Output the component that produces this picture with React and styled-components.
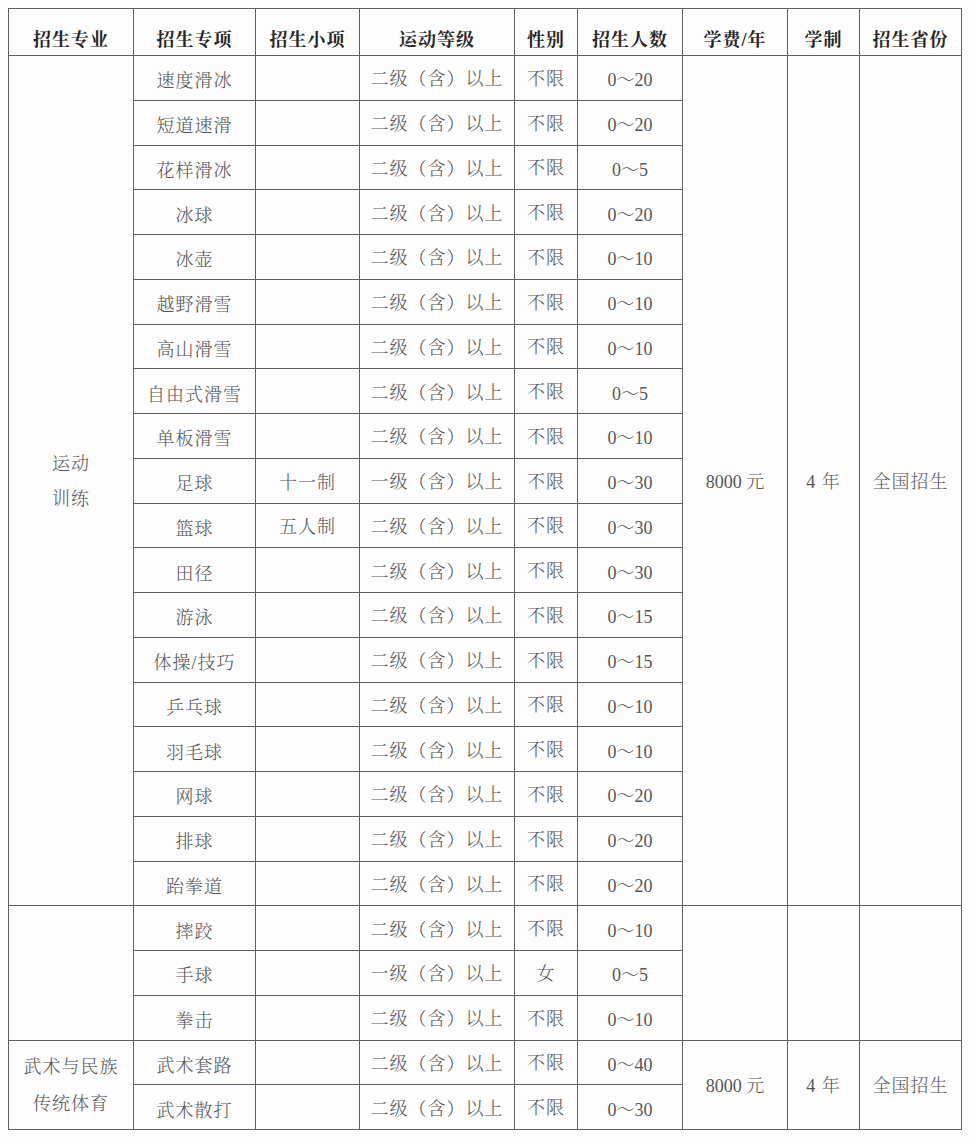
import React from "react";
import styled, { createGlobalStyle } from "styled-components";

const Global = createGlobalStyle`
  html, body { background: #fdfdfd; }
  body {
    margin: 8px;
    font-family: "Liberation Serif", "Noto Serif CJK SC", "Noto Sans CJK SC", serif;
  }
`;

const Table = styled.div`
  display: grid;
  width: 954px;
  box-sizing: border-box;
  grid-template-columns: 124px 121px 103px 154px 62px 104px 104px 71px 101px;
  grid-template-rows: 46px repeat(24, 43.75px);
  gap: 1px;
  padding: 1px;
  background: #606060;
`;

const Head = styled.div`
  background: #fdfdfd;
  display: flex;
  align-items: center;
  justify-content: center;
  padding-top: 11px;
  box-sizing: border-box;
  font-size: 18px;
  font-weight: 700;
  letter-spacing: 1px;
  color: #262626;
`;

const Cell = styled.div`
  background: #fdfdfd;
  grid-row: span ${(p) => p.$span || 1};
  display: flex;
  flex-direction: column;
  align-items: center;
  justify-content: center;
  box-sizing: border-box;
  padding-top: ${(p) => p.$nudge ?? 4}px;
  font-size: 18px;
  font-weight: 300;
  letter-spacing: ${(p) => (p.$tight ? 0 : 1)}px;
  color: #565656;
  line-height: ${(p) => p.$lh || 20}px;
  white-space: nowrap;
`;

const headers = ["招生专业", "招生专项", "招生小项", "运动等级", "性别", "招生人数", "学费/年", "学制", "招生省份"];

const rows = [
  ["速度滑冰", "", "二", "不限", "0～20"],
  ["短道速滑", "", "二", "不限", "0～20"],
  ["花样滑冰", "", "二", "不限", "0～5"],
  ["冰球", "", "二", "不限", "0～20"],
  ["冰壶", "", "二", "不限", "0～10"],
  ["越野滑雪", "", "二", "不限", "0～10"],
  ["高山滑雪", "", "二", "不限", "0～10"],
  ["自由式滑雪", "", "二", "不限", "0～5"],
  ["单板滑雪", "", "二", "不限", "0～10"],
  ["足球", "十一制", "一", "不限", "0～30"],
  ["篮球", "五人制", "二", "不限", "0～30"],
  ["田径", "", "二", "不限", "0～30"],
  ["游泳", "", "二", "不限", "0～15"],
  ["体操/技巧", "", "二", "不限", "0～15"],
  ["乒乓球", "", "二", "不限", "0～10"],
  ["羽毛球", "", "二", "不限", "0～10"],
  ["网球", "", "二", "不限", "0～20"],
  ["排球", "", "二", "不限", "0～20"],
  ["跆拳道", "", "二", "不限", "0～20"],
  ["摔跤", "", "二", "不限", "0～10"],
  ["手球", "", "一", "女", "0～5"],
  ["拳击", "", "二", "不限", "0～10"],
  ["武术套路", "", "二", "不限", "0～40"],
  ["武术散打", "", "二", "不限", "0～30"],
];

const groups = [
  { start: 0, span: 19, major: ["运动", "训练"], lh: 35, fee: true },
  { start: 19, span: 3, major: [], fee: false },
  { start: 22, span: 2, major: ["武术与民族", "传统体育"], lh: 37, fee: true },
];

function RowCells({ r, i }) {
  const g = groups.find((x) => x.start === i);
  return (
    <>
      {g && (
        <Cell $span={g.span} $lh={g.lh} $nudge={2}>
          {g.major.map((m) => (
            <span key={m}>{m}</span>
          ))}
        </Cell>
      )}
      <Cell $nudge={7}>{r[0]}</Cell>
      <Cell $nudge={4}>{r[1]}</Cell>
      <Cell $nudge={3}>{r[2]}级（含）以上</Cell>
      <Cell $nudge={2}>{r[3]}</Cell>
      <Cell $nudge={5} $tight>{r[4]}</Cell>
      {g && (
        <>
          <Cell $span={g.span} $nudge={2} $tight>{g.fee ? "8000 元" : ""}</Cell>
          <Cell $span={g.span} $nudge={2}>{g.fee ? "4 年" : ""}</Cell>
          <Cell $span={g.span} $nudge={2}>{g.fee ? "全国招生" : ""}</Cell>
        </>
      )}
    </>
  );
}

export default function App() {
  return (
    <>
      <Global />
      <Table>
        {headers.map((h) => (
          <Head key={h}>{h}</Head>
        ))}
        {rows.map((r, i) => (
          <RowCells key={i} r={r} i={i} />
        ))}
      </Table>
    </>
  );
}
